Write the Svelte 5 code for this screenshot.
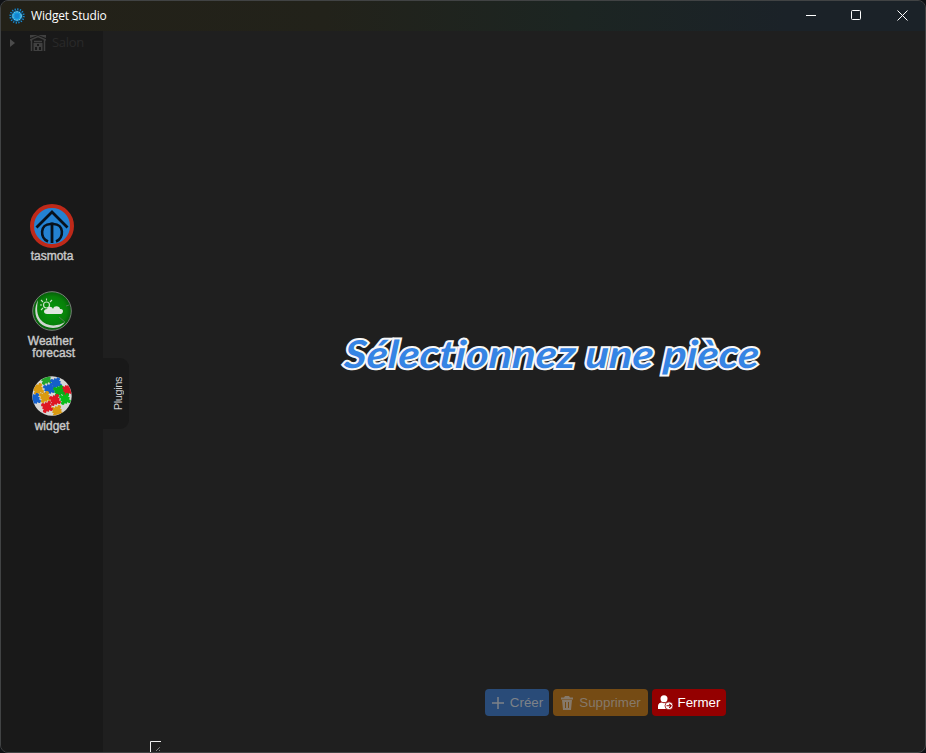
<script>
  const plugins = [
    { id: 'tasmota', label: 'tasmota' },
    { id: 'weather', label: 'Weather \n forecast' },
    { id: 'widget', label: 'widget' }
  ];
  const piece = 'M-2-5C-5-10 5-10 2-5L5-5L5-2C10-5 10 5 5 2L5 5L2 5C5 10-5 10-2 5L-5 5L-5 2C-10 5-10-5-5-2L-5-5Z';
  const pieces = [
    [14, 3, '#23a52b'], [24, 7, '#145fc9'], [6, 13, '#d99a10'], [17, 13, '#145fc9'],
    [35, 14, '#df1723'], [27, 15, '#08ad18'], [3, 23, '#145fc9'], [13, 21, '#d99a10'],
    [33, 23, '#08bd18'], [23, 24, '#df1723'], [25, 35, '#d99a10'], [15, 31, '#df1723']
  ];
</script>

<div class="window">
  <header>
    <svg class="appicon" width="16" height="16" viewBox="0 0 16 16">
      <circle cx="8" cy="8" r="5.8" fill="#075a91" />
      <circle cx="8" cy="8" r="6.8" fill="none" stroke="#1689d2" stroke-width="1.7" stroke-dasharray="1.3 1.37" />
      <circle cx="8" cy="8" r="4.3" fill="#159bde" stroke="#8bd9ef" stroke-width="1" stroke-dasharray="2 .7" />
      <circle cx="8" cy="8" r="2.4" fill="#1684cf" />
    </svg>
    <span class="name">Widget Studio</span>
    <div class="controls">
      <svg width="46" height="30" viewBox="0 0 46 30"><path d="M19 14.5h10" /></svg>
      <svg width="46" height="30" viewBox="0 0 46 30"><rect x="18.5" y="9.5" width="9" height="9" rx="1" /></svg>
      <svg width="46" height="30" viewBox="0 0 46 30"><path d="M18.500 9.500l10 10m0-10l-10 10" /></svg>
    </div>
  </header>
  <div class="body">
    <aside>
      <div class="room">
        <svg class="arrow" width="5" height="8" viewBox="0 0 5 8"><path d="M0 0L5 4L0 8Z" fill="#4b4b4b" /></svg>
        <svg class="house" width="16" height="16" viewBox="0 0 16 16">
          <path d="M0 0H16V3L8 0L0 3Z" fill="#404040" />
          <path d="M0 5L8 1.500L16 5M1.500 5V16M14.500 5V16M4 6.500H12" stroke="#404040" stroke-width="1.500" fill="none" />
          <path fill-rule="evenodd" d="M3.500 8H12.500V16H3.500ZM7 9V11H9V9ZM5 12V15H7V12ZM9 12V15H11V12Z" fill="#404040" />
        </svg>
        <span>Salon</span>
      </div>
      <div class="plugins">
        {#each plugins as plugin}
          <div class="plugin {plugin.id}">
            {#if plugin.id === 'tasmota'}
              <svg width="44" height="44" viewBox="0 0 44 44">
                <circle cx="22" cy="22" r="20" fill="#2482d2" stroke="#be2919" stroke-width="4" />
                <path d="M6.500 23.500L22 8L37.500 23.500M22 18.500V39" fill="none" stroke="#07111c" stroke-width="2.8" />
                <path d="M18 37.500C9.500 34 10 20 20.500 20H23.500C34 20 34.500 34 26 37.500" fill="none" stroke="#07111c" stroke-width="2.6" />
              </svg>
            {:else if plugin.id === 'weather'}
              <svg width="40" height="40" viewBox="0 0 40 40">
                <defs><radialGradient id="green"><stop offset="0" stop-color="#069a0a" /><stop offset=".75" stop-color="#078009" /><stop offset="1" stop-color="#075c0b" /></radialGradient></defs>
                <circle cx="20" cy="20" r="19.3" fill="url(#green)" stroke="#788078" stroke-width="1" />
                <path d="M6 9C-1 23 6 37 21 37C27 37 31 34 33 31C27 35 15 37 8 28C4 22 5 15 6 9Z" fill="#d0d5d0" />
                <path d="M27 26L33 31M34 15l3-1" stroke="#527653" />
                <circle cx="14.500" cy="14" r="3" fill="none" stroke="#c5dfc3" stroke-width="1.2" />
                <path d="M14.500 7.500v2M9 9l2 2M8 14h2M9 19l2-2M20 9l-2 2" stroke="#c5dfc3" stroke-width="1.1" />
                <path d="M15 23C11 23 11 18 15 18C16 15 20 15 21 18C22 14 28 15 28 18C32 17 32 23 28 23Z" fill="#e1e6df" />
              </svg>
            {:else}
              <svg width="40" height="40" viewBox="0 0 40 40">
                <defs><clipPath id="disc"><circle cx="20" cy="20" r="19.5" /></clipPath></defs>
                <circle cx="20" cy="20" r="19.7" fill="#d7d7d5" />
                <g clip-path="url(#disc)">
                  {#each pieces as [x, y, color]}
                    <path d={piece} transform="translate({x} {y}) rotate(28) scale(.73)" fill={color} />
                  {/each}
                </g>
              </svg>
            {/if}
            <div class="label">{plugin.label}</div>
          </div>
        {/each}
      </div>
    </aside>
    <div class="tab"><span>Plugins</span></div>
    <main>
      <h1>Sélectionnez une pièce</h1>
      <div class="actions">
        <button class="create" disabled>
          <svg width="14" height="14" viewBox="0 0 14 14"><path d="M7 1v12M1 7h12" fill="none" stroke="currentColor" stroke-width="1.5" /></svg>Créer
        </button>
        <button class="delete" disabled>
          <svg width="14" height="14" viewBox="0 0 14 14"><path fill="currentColor" fill-rule="evenodd" d="M5 0h4l1 1.500h3v2H1v-2h3zM2 4h10l-1 10H3zM5 6v6h1V6zM8 6v6h1V6z" /></svg>Supprimer
        </button>
        <button class="close">
          <svg width="15" height="15" viewBox="0 0 15 15"><circle cx="6" cy="3.700" r="3.500" fill="#fff" /><path d="M0 14V11C0 8.500 2 7.500 4 7.500Q6 9 8 7.500L10 8V14Z" fill="#fff" /><circle cx="11" cy="10.800" r="4" fill="#fff" stroke="#940000" stroke-width=".8" /><path d="M8.500 10.800h4.500M11.200 8.800l2 2-2 2" fill="none" stroke="#940000" stroke-width="1.100" /></svg>Fermer
        </button>
      </div>
      <svg class="grip" width="11" height="11" viewBox="0 0 11 11"><path d="M.5 11V.5H11" fill="none" stroke="#eee" /><path d="M6 10l4-4M9 10l1-1" stroke="#aaa" fill="none" stroke-dasharray="1 .6" /></svg>
    </main>
  </div>
</div>

<style>
  :global(body) { background: #101215; overflow: hidden; }
  .window { box-sizing: border-box; width: 926px; height: 753px; border: 1px solid #414344; border-radius: 8px; overflow: hidden; background: #1f1f1f; display: flex; flex-direction: column; font-family: "Liberation Sans", Arial, sans-serif; }
  header { height: 30px; flex: none; display: flex; align-items: center; background: linear-gradient(90deg, #232118 0%, #22221a 35%, #1c2522 62%, #1b2228 85%, #1b2228 100%); color: #fff; }
  .appicon { margin-left: 8px; }
  .name { margin-left: 6px; font: 12px/16px "Open Sans", "Noto Sans", sans-serif; letter-spacing: -.18px; }
  .controls { display: flex; margin-left: auto; }
  .controls svg { fill: none; stroke: #fff; stroke-width: 1; }
  .body { flex: 1; min-height: 0; display: flex; }
  aside { width: 102px; flex: none; background: #191919; }
  .room { display: flex; align-items: center; height: 24px; color: #292929; font: 13px/16px "Open Sans", sans-serif; letter-spacing: -.3px; }
  .arrow { margin-left: 9px; }
  .house { margin-left: 15px; }
  .room span { margin-left: 6px; margin-top: -2px; }
  .plugins { padding-top: 149px; display: flex; flex-direction: column; }
  .plugin { height: 85px; display: flex; flex-direction: column; align-items: center; }
  .tasmota { height: 87px; }
  .plugin > svg { flex: none; }
  .label { margin-top: 4px; color: #c9c9c9; font-size: 12px; line-height: 12px; text-align: center; white-space: pre; -webkit-text-stroke: .4px #c9c9c9; }
  .tasmota .label { margin-top: 2px; }
  .tab { width: 26px; height: 71px; margin-top: 327px; flex: none; background: #191919; border-radius: 0 9px 9px 0; display: flex; align-items: center; justify-content: center; color: #d0d0d0; font-size: 11px; letter-spacing: -.4px; }
  .tab span { writing-mode: vertical-rl; transform: rotate(180deg); margin: 1px 0 0 4px; }
  main { flex: 1; display: flex; flex-direction: column; }
  h1 { align-self: flex-start; margin: 297px 0 0 215px; height: 50px; line-height: 50px; font-family: Lato, sans-serif; font-size: 38.5px; font-style: italic; font-weight: 700; letter-spacing: .2px; color: #3584e4; white-space: nowrap; -webkit-text-stroke: 4px #f8f8f8; paint-order: stroke fill; transform: scaleX(1.118) skewX(-4deg); transform-origin: left 70%; }
  .actions { margin: 311px 0 0 356px; display: flex; gap: 4px; }
  button { box-sizing: border-box; height: 27px; padding: 0 5px; border: 0; border-radius: 4px; font: 13.333px/27px "Liberation Sans", Arial, sans-serif; display: flex; align-items: center; justify-content: center; gap: 5px; white-space: nowrap; }
  .create { width: 64px; background: #294b78; color: #7d8288; }
  .delete { width: 95px; background: #754b14; color: #86796a; }
  .close { width: 74px; background: #940000; color: #fff; }
  .grip { margin: 25px 0 0 21px; }
</style>
